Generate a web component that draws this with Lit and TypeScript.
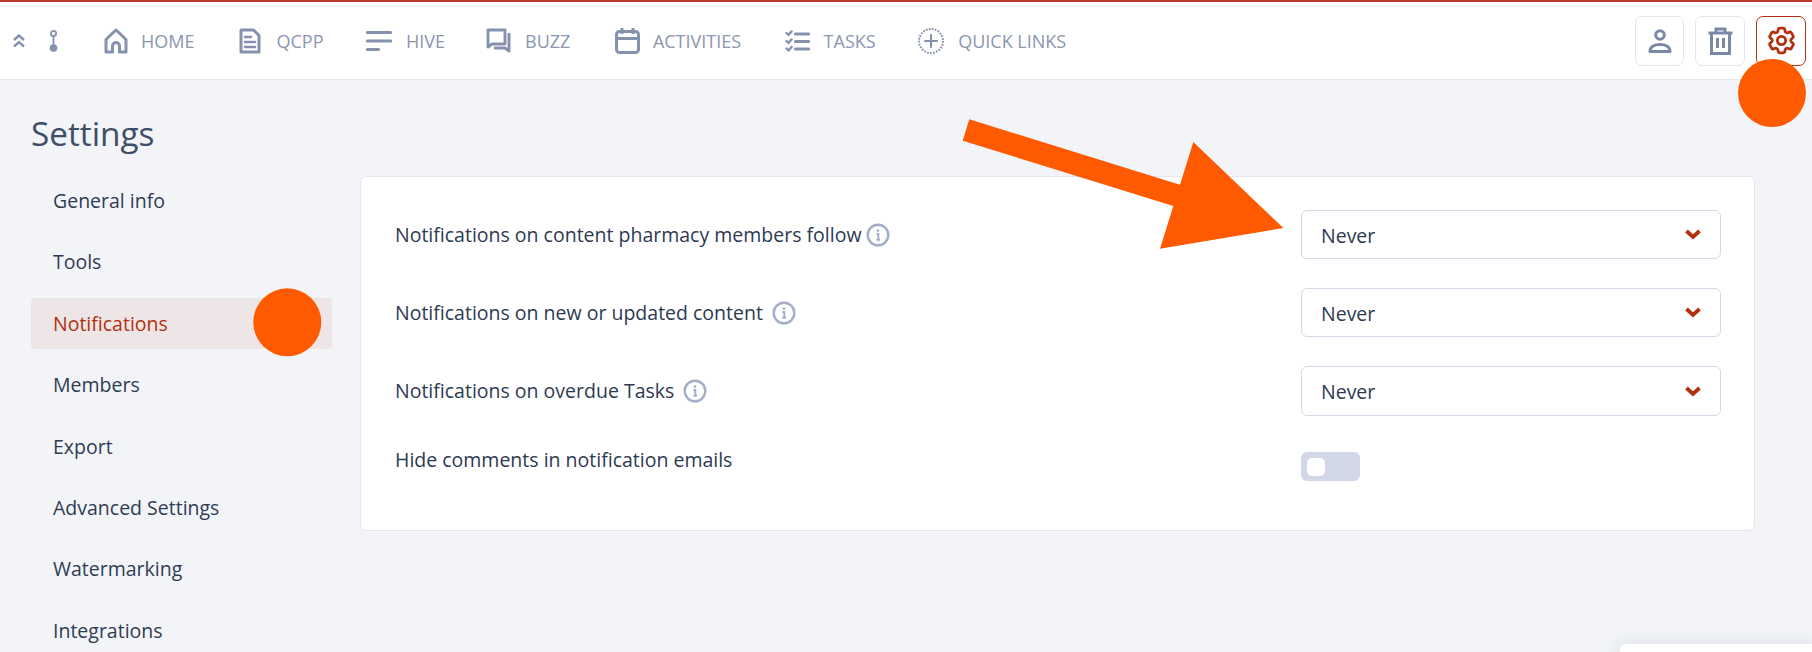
import { LitElement, html, css, svg } from "lit";
import { customElement } from "lit/decorators.js";

const navIcons: Record<string, unknown> = {
  home: svg`<svg class="ic" width="24" height="26" viewBox="0 0 24 26" fill="none" stroke="currentColor" stroke-width="3" stroke-linejoin="round"><path d="M2 11.500 12 2l10 9.500V24h-6.500v-6a3.500 3.500 0 0 0-7 0v6H2Z"/></svg>`,
  doc: svg`<svg class="ic" width="22" height="26" viewBox="0 0 22 26" fill="none" stroke="currentColor" stroke-width="3" stroke-linejoin="round"><path d="M2 2h12.500L20 7.500V24H2Z"/><path d="M6 9h6M6 14h10M6 19h10" stroke-width="2.600" stroke-linecap="round"/></svg>`,
  hive: svg`<svg class="ic" width="26" height="22" viewBox="0 0 26 22" fill="none" stroke="currentColor" stroke-width="3.200" stroke-linecap="round"><path d="M1.500 2.500h23M1.500 11h23M1.500 19.500h11"/></svg>`,
  buzz: svg`<svg class="ic" width="25" height="25" viewBox="0 0 25 25" fill="none" stroke="currentColor" stroke-width="2.900" stroke-linejoin="round"><path d="M2 2h17v14H6l-4 3Z"/><path d="M23 5v18l-4-3H8"/></svg>`,
  cal: svg`<svg class="ic" width="25" height="27" viewBox="0 0 25 27" fill="none" stroke="currentColor" stroke-width="3" stroke-linejoin="round"><rect x="1.500" y="4.500" width="22" height="21" rx="3"/><path d="M1.500 11.500h22M7 1v6M18 1v6"/></svg>`,
  tasks: svg`<svg class="ic" width="25" height="22" viewBox="0 0 25 22" fill="none" stroke="currentColor" stroke-linecap="round" stroke-linejoin="round"><path d="M1.500 3l2 2 3-3.500M1.500 11l2 2 3-3.500M1.500 18.500l2 2 3-3.500" stroke-width="2.400"/><path d="M10.500 4h13M10.500 11.500h13M10.500 19h13" stroke-width="3.200"/></svg>`,
  plus: svg`<svg class="ic" width="26" height="26" viewBox="0 0 26 26" fill="none" stroke="currentColor"><circle cx="13" cy="13" r="12" stroke-width="2" stroke-dasharray="1.700 1.300"/><path d="M13 7v12M7 13h12" stroke-width="2.200" stroke-linecap="round"/></svg>`,
};

const info = svg`<svg width="24" height="24" viewBox="0 0 24 24" fill="none" stroke="#a3aec8"><circle cx="12" cy="12" r="10.300" stroke-width="2.400"/><path d="M10.400 11h1.900v5.600M10.400 16.800h3.600" stroke-width="2"/><circle cx="12" cy="7.600" r="1.300" fill="#a3aec8" stroke="none"/></svg>`;

const chevron = svg`<svg width="16" height="11" viewBox="0 0 16 11" fill="none" stroke="#b3300f" stroke-width="3.800" stroke-linejoin="miter"><path d="M1.500 2 8 8l6.500-6"/></svg>`;

@customElement("app-root")
export class AppRoot extends LitElement {
  static styles = css`
    :host { display: block; width: 1812px; height: 652px; overflow: hidden; position: relative; background: #f2f4f8; font-family: "Open Sans", sans-serif; color: #2d3a52; }
    header { height: 77px; border-top: 2px solid #b83a2b; border-bottom: 1px solid #e3e6ef; background: #fff; display: flex; align-items: center; padding: 0 6px 0 13px; }
    .collapse { display: flex; align-items: center; gap: 24px; margin-right: 45.500px; color: #8592ad; }
    nav { display: flex; align-items: center; gap: 43.500px; flex: 1; }
    .item { display: flex; align-items: center; gap: 14px; color: #8b96b0; font-size: 18px; line-height: 26px; }
    .item.home { gap: 13.500px; margin-right: 1.500px; }
    .item.doc { gap: 15px; margin-right: -1px; }
    .item.hive { margin-right: -3px; }
    .item.buzz { gap: 14.500px; margin-right: 1px; }
    .item.cal { gap: 13px; }
    .item.tasks { margin-right: -1px; }
    .ic { display: block; color: #8592ad; }
    .tools { display: flex; gap: 11px; }
    .tool { width: 48px; height: 48px; border: 1px solid #e3e6f1; border-radius: 7px; display: flex; align-items: center; justify-content: center; color: #7c89a6; }
    .tool.narrow { width: 47px; }
    .tool.on { border-color: #b3300f; color: #b3300f; }
    h1 { margin: 0; padding: 31px 0 0 31px; font-weight: 400; font-size: 33.300px; line-height: 45px; color: #3f4d66; height: 51px; }
    .main { display: flex; padding: 13px 57px 0 31px; gap: 28px; align-items: flex-start; }
    aside { width: 301px; flex: none; display: flex; flex-direction: column; gap: 10.400px; }
    .link { height: 51px; display: flex; align-items: center; padding-left: 22px; font-size: 19.500px; color: #2f3c54; border-radius: 4px; }
    .link.on { background: #eee5e7; color: #b3300f; }
    .card { flex: 1; margin-top: 1px; background: #fff; border: 1px solid #e4e7f0; border-radius: 6px; padding: 33px 33px 49px 34px; display: flex; flex-direction: column; gap: 29px; }
    .row { display: flex; justify-content: space-between; align-items: center; }
    .row.top { align-items: flex-start; }
    .label { display: flex; align-items: center; gap: 9px; font-size: 19.500px; line-height: 28px; color: #2d3a52; }
    .label.tight { gap: 4px; }
    .label.last { padding-top: 1px; }
    .label svg { display: block; }
    .select { width: 420px; height: 49px; box-sizing: border-box; border: 1px solid #d3d9e8; border-radius: 6px; display: flex; align-items: center; justify-content: space-between; padding: 0 19px 0 19px; font-size: 19.500px; color: #2d3a52; }
    .select span { padding-top: 2px; }
    .row:nth-child(3) .select { height: 50px; }
    .row:nth-child(3) .select span { padding-top: 0; }
    .toggle-wrap { width: 420px; padding-top: 7px; }
    .toggle { width: 59px; height: 29px; box-sizing: border-box; padding: 6px; background: #d2d8e7; border-radius: 6px; }
    .knob { width: 18px; height: 18px; background: #fff; border-radius: 5px; }
    .marks { position: absolute; left: 0; top: 0; pointer-events: none; }
    .float { position: absolute; left: 1620px; top: 644px; width: 192px; height: 20px; background: #fff; border-radius: 5px 0 0 0; box-shadow: 0 0 16px rgba(120,130,160,.22); }
  `;

  render() {
    const nav = [["home", "HOME", "home"], ["doc", "QCPP", "doc"], ["hive", "HIVE", "hive"], ["buzz", "BUZZ", "buzz"], ["cal", "ACTIVITIES", "cal"], ["tasks", "TASKS", "tasks"], ["plus", "QUICK LINKS", "plus"]];
    const links = ["General info", "Tools", "Notifications", "Members", "Export", "Advanced Settings", "Watermarking", "Integrations"];
    const rows = [["Notifications on content pharmacy members follow", true], ["Notifications on new or updated content", false], ["Notifications on overdue Tasks", false]] as [string, boolean][];
    return html`
      <header>
        <div class="collapse">
          <svg width="12" height="14" viewBox="0 0 12 14" fill="none" stroke="currentColor" stroke-width="2.400"><path d="M1 6l5-4.500L11 6M1 12.500 6 8l5 4.500"/></svg>
          <svg width="9" height="22" viewBox="0 0 9 22" fill="none" stroke="currentColor" stroke-width="1.800"><circle cx="4.500" cy="3.500" r="2.600"/><path d="M4.500 6v9"/><circle cx="4.500" cy="18" r="3.800" fill="currentColor" stroke="none"/></svg>
        </div>
        <nav>
          ${nav.map(([i, t, c]) => html`<div class="item ${c}">${navIcons[i]}<span>${t}</span></div>`)}
        </nav>
        <div class="tools">
          <div class="tool narrow"><svg width="24" height="26" viewBox="0 0 24 26" fill="none" stroke="currentColor" stroke-width="3" stroke-linejoin="round"><circle cx="12" cy="7" r="4.300"/><path d="M2 23.500c0-4.500 4-7 10-7s10 2.500 10 7Z"/></svg></div>
          <div class="tool"><svg width="25" height="28" viewBox="0 0 25 28" fill="none" stroke="currentColor" stroke-width="3"><path d="M0.500 6h24M8 6V2h9v4M3.500 6v20.500h18V6M9.500 11v10M15.500 11v10"/></svg></div>
          <div class="tool on"><svg width="33" height="33" viewBox="0 0 24 24" fill="none" stroke="currentColor" stroke-width="2"><path d="M9.594 3.940c.090-.542.560-.940 1.110-.940h2.593c.550 0 1.020.398 1.110.940l.213 1.281c.063.374.313.686.645.870.074.040.147.083.220.127.325.196.720.257 1.075.124l1.217-.456a1.125 1.125 0 0 1 1.370.490l1.296 2.247a1.125 1.125 0 0 1-.260 1.431l-1.003.827c-.293.241-.438.613-.430.992a7.723 7.723 0 0 1 0 .255c-.008.378.137.750.430.991l1.004.827c.424.350.534.955.260 1.430l-1.298 2.247a1.125 1.125 0 0 1-1.369.491l-1.217-.456c-.355-.133-.750-.072-1.076.124a6.470 6.470 0 0 1-.220.128c-.331.183-.581.495-.644.869l-.213 1.281c-.090.543-.560.940-1.110.940h-2.594c-.550 0-1.019-.398-1.110-.940l-.213-1.281c-.062-.374-.312-.686-.644-.870a6.520 6.520 0 0 1-.220-.127c-.325-.196-.720-.257-1.076-.124l-1.217.456a1.125 1.125 0 0 1-1.369-.490l-1.297-2.247a1.125 1.125 0 0 1 .260-1.431l1.004-.827c.292-.240.437-.613.430-.991a6.932 6.932 0 0 1 0-.255c.007-.380-.138-.751-.430-.992l-1.004-.827a1.125 1.125 0 0 1-.260-1.430l1.297-2.247a1.125 1.125 0 0 1 1.370-.491l1.216.456c.356.133.751.072 1.076-.124.072-.044.146-.086.220-.128.332-.183.582-.495.644-.869l.214-1.280Z"/><circle cx="12" cy="12" r="3"/></svg></div>
        </div>
      </header>
      <h1>Settings</h1>
      <div class="main">
        <aside>
          ${links.map((l) => html`<div class="link ${l === "Notifications" ? "on" : ""}">${l}</div>`)}
        </aside>
        <section class="card">
          ${rows.map(([t, tight]) => html`<div class="row"><div class="label ${tight ? "tight" : ""}"><span>${t}</span>${info}</div><div class="select"><span>Never</span>${chevron}</div></div>`)}
          <div class="row top"><div class="label last"><span>Hide comments in notification emails</span></div><div class="toggle-wrap"><div class="toggle"><div class="knob"></div></div></div></div>
        </section>
      </div>
      <svg class="marks" width="1812" height="652" viewBox="0 0 1812 652" fill="#ff5a00">
        <circle cx="1772" cy="93" r="34"/>
        <circle cx="287.300" cy="322.300" r="34"/>
        <polygon points="969.300,119.300 1180,184.700 1193.300,142 1283.300,228 1160,248.700 1173.300,206 962.700,140.700"/>
      </svg>
      <div class="float"></div>
    `;
  }
}
